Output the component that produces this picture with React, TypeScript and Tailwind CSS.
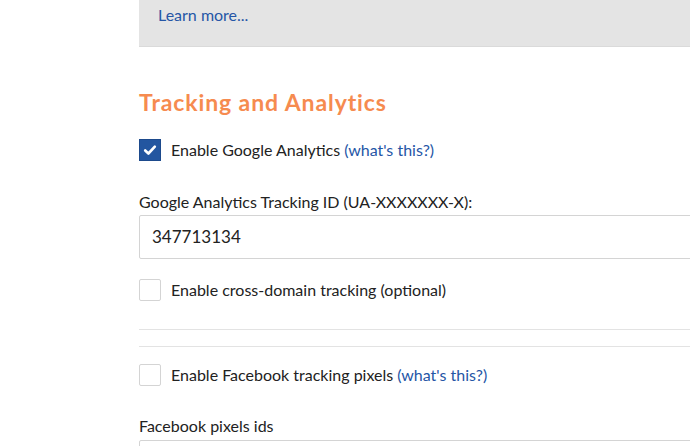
const font = { fontFamily: '"Lato", "Liberation Sans", sans-serif' };

function Checkbox({ checked }: { checked?: boolean }) {
  if (checked) {
    return (
      <span className="flex h-[22px] w-[22px] shrink-0 items-center justify-center border border-[#1d4a8c] bg-[#2356a0]">
        <svg viewBox="0 0 16 16" className="h-[14px] w-[14px]">
          <path d="M2.5 8.5 L6.2 12 L13.5 4.2" fill="none" stroke="#fff" strokeWidth="3" strokeLinecap="round" strokeLinejoin="round" />
        </svg>
      </span>
    );
  }
  return <span className="h-[22px] w-[22px] shrink-0 rounded-[2px] border border-[#d4d4d4] bg-white" />;
}

function CheckRow({ checked, label, link, className }: { checked?: boolean; label: string; link?: boolean; className: string }) {
  return (
    <div className={`flex h-[22px] items-center ${className}`}>
      <Checkbox checked={checked} />
      <span className="ml-[10px] text-[16px] leading-5 text-[#222]">
        {label}
        {link && <span className="text-[#2556a6]"> (what's this?)</span>}
      </span>
    </div>
  );
}

export default function App() {
  return (
    <div className="h-[446px] w-[690px] overflow-hidden bg-white" style={font}>
      <div className="w-[700px] pl-[139px]">
        <div className="h-[47px] border-b border-[#dadada] bg-[#e4e4e4] pl-[19px] pt-[3px]">
          <a className="text-[16px] leading-5 text-[#2556a6]">Learn more...</a>
        </div>

        <h2 className="mt-[41px] h-[28px] text-[23px] font-bold leading-7 tracking-[0.9px] text-[#f68b4f]">Tracking and Analytics</h2>

        <CheckRow checked label="Enable Google Analytics" link className="mt-[23px]" />

        <div className="mt-[31px] text-[16px] leading-5 text-[#222]">Google Analytics Tracking ID (UA-XXXXXXX-X):</div>
        <div className="mt-[3px] flex h-[44px] items-center rounded-[2px] border border-[#d4d4d4] bg-white pl-[12px] text-[17px] text-[#222]">
          347713134
        </div>

        <CheckRow label="Enable cross-domain tracking (optional)" className="mt-[20px]" />

        <div className="mt-[28px] border-t border-[#e3e3e3]" />
        <div className="mt-[16px] border-t border-[#e3e3e3]" />

        <CheckRow label="Enable Facebook tracking pixels" link className="mt-[17px]" />

        <div className="mt-[30px] text-[16px] leading-5 text-[#222]">Facebook pixels ids</div>
        <div className="mt-[4px] h-[44px] rounded-[2px] border border-[#d4d4d4] bg-white" />
      </div>
    </div>
  );
}
